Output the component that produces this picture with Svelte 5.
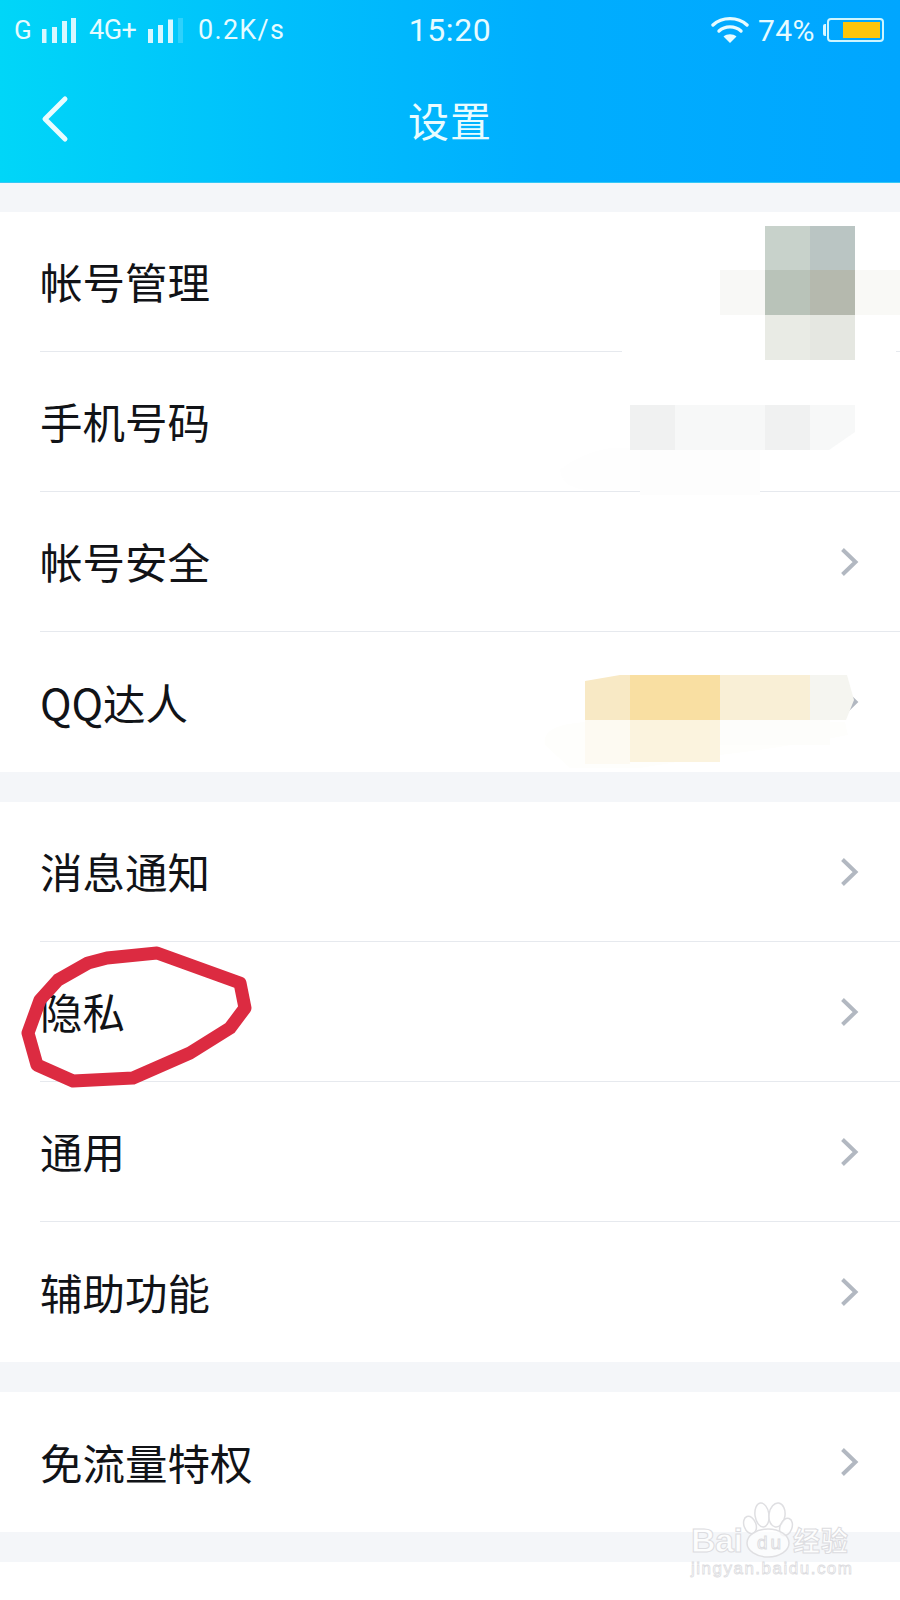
<script>
  const groups = [
    [
      { label: '帐号管理', arrow: false },
      { label: '手机号码', arrow: false },
      { label: '帐号安全', arrow: true },
      { label: 'QQ达人', arrow: true, last: true }
    ],
    [
      { label: '消息通知', arrow: true },
      { label: '隐私', arrow: true },
      { label: '通用', arrow: true },
      { label: '辅助功能', arrow: true, last: true }
    ],
    [{ label: '免流量特权', arrow: true, last: true }]
  ];
  const mosaic = [
    [765, 226, 45, 44, '#c8d2cb'], [810, 226, 45, 44, '#bac5c3'],
    [720, 270, 45, 45, '#f8f8f6'], [765, 270, 45, 45, '#b9c3b9'], [810, 270, 45, 45, '#b5b9ae'], [855, 270, 45, 45, '#f9f9f6'],
    [765, 315, 45, 45, '#e9ebe5'], [810, 315, 45, 45, '#e5e7e1'],
    [630, 405, 45, 45, '#f0f1f1'], [675, 405, 90, 45, '#f7f8f8'], [765, 405, 45, 45, '#f0f1f1'],
    [640, 450, 120, 45, '#fdfdfd'],
    [630, 675, 90, 45, '#f9dfa2'], [720, 675, 90, 45, '#f9efd6'],
    [630, 720, 90, 42, '#fbf3de']
  ];
  const bars1 = [[41, 28, 4.5, 14], [51, 26, 5, 16], [61, 20, 5, 22], [70, 17, 5, 25]];
  const bars2 = [[148, 28, 5, 14], [158, 24, 5, 18], [168, 18.5, 5, 23.5]];
</script>

<div class="page">
  <header class="head">
    <div class="status">
      <div class="left">
        <span class="g">G</span>
        <svg class="bars" width="36" height="28" viewBox="40 16 36 28" aria-hidden="true">
          {#each bars1 as b}<rect x={b[0]} y={b[1]} width={b[2]} height={b[3]} fill="#d8f7ff" />{/each}
        </svg>
        <span class="net">4G+</span>
        <svg class="bars" width="36" height="28" viewBox="148 16 36 28" aria-hidden="true">
          {#each bars2 as b}<rect x={b[0]} y={b[1]} width={b[2]} height={b[3]} fill="#d8f7ff" />{/each}
          <rect x="178" y="17" width="5" height="25" fill="#ffffff" opacity="0.18" />
        </svg>
        <span class="speed">0.2K/s</span>
      </div>
      <div class="time">15:20</div>
      <div class="right">
        <svg width="38" height="28" viewBox="0 0 38 28" aria-hidden="true">
          <g fill="none" stroke="#e6fbff" stroke-width="3.4" stroke-linecap="round">
            <path d="M2 9 C11 0.5 27 0.5 36 9" />
            <path d="M8 15 C14 9.5 24 9.5 30 15" />
          </g>
          <path d="M19 27 L12.5 20.5 C16 17.4 22 17.4 25.500 20.500 Z" fill="#e6fbff" />
        </svg>
        <span class="pct">74%</span>
        <div class="battery">
          <i class="cap"></i>
          <div class="cell"><i class="fill"></i></div>
        </div>
      </div>
    </div>
    <div class="nav">
      <svg class="back" width="30" height="48" viewBox="0 0 30 48" aria-hidden="true">
        <path d="M24 4 L4 24 L24 44" fill="none" stroke="#e9fcff" stroke-width="5" stroke-linecap="round" stroke-linejoin="round" />
      </svg>
      <h1>设置</h1>
    </div>
  </header>

  {#each groups as group}
    <section class="group">
      {#each group as row}
        <div class="row" class:last={row.last}>
          <span class="label">{row.label}</span>
          {#if row.arrow}
            <svg class="chev" width="19" height="30" viewBox="0 0 19 30" aria-hidden="true">
              <path d="M2.500 2.500 L15.500 15 L2.500 27.500" fill="none" stroke="#b2b8c1" stroke-width="4" />
            </svg>
          {/if}
        </div>
      {/each}
    </section>
  {/each}
  <div class="tail"></div>

  <svg class="overlay" width="900" height="1600" viewBox="0 0 900 1600">
    <path d="M622 351 H896 V353 H622 Z" fill="#ffffff" />
    <path d="M560 470 Q600 440 640 450 V490 H590 Q565 490 560 470 Z" fill="#fefefe" />
    <path d="M545 745 Q540 725 585 722 H845 L848 735 Q800 745 720 755 L640 768 H570 Z" fill="#fefefc" />
    {#each mosaic as m}<rect x={m[0]} y={m[1]} width={m[2]} height={m[3]} fill={m[4]} />{/each}
    <path d="M810 405 H855 V432 L829 450 H810 Z" fill="#f7f8f8" />
    <path d="M585 681 L620 675 H630 V720 H585 Z" fill="#f8e9c5" />
    <path d="M810 675 H847 L854 700 L846 720 H810 Z" fill="#f5f5f0" />
    <rect x="585" y="720" width="45" height="44" fill="#fdfaf2" />
    <rect x="720" y="720" width="110" height="25" fill="#fdfdfb" />

    <path class="ring" d="M157 953 L240 983 L245 1008 L230 1028 L190 1053 L133 1078 L73 1081 L37 1065 L28 1033 L40 1000 L58 980 L88 963 L107 958 Z" />

    <g class="mark">
      <ellipse cx="750" cy="1525" rx="6" ry="9" transform="rotate(-20 750 1525)" />
      <ellipse cx="762" cy="1515" rx="7" ry="12" transform="rotate(-8 762 1515)" />
      <ellipse cx="777" cy="1515" rx="8" ry="12" transform="rotate(8 777 1515)" />
      <ellipse cx="786" cy="1527" rx="6" ry="9" transform="rotate(20 786 1527)" />
      <ellipse cx="768" cy="1543" rx="21" ry="14" />
      <text class="mk" x="691" y="1552" font-size="34" font-weight="700" textLength="52">Bai</text>
      <text class="mk" x="757" y="1549" font-size="19" textLength="24">du</text>
      <text class="mk" x="793" y="1551" font-size="27" font-weight="700" textLength="55">经验</text>
      <text class="mk thin" x="691" y="1574" font-size="17" textLength="161">jingyan.baidu.com</text>
    </g>
  </svg>
</div>

<style>
  :global(body) {
    margin: 0;
    background: #f4f6f9;
  }
  .page {
    position: relative;
    width: 900px;
    height: 1600px;
    overflow: hidden;
    background: #f4f6f9;
    font-family: "Noto Sans CJK SC", "Noto Sans", sans-serif;
  }
  .head {
    height: 183px;
    box-sizing: border-box;
    background: linear-gradient(90deg, #00d6f8 0%, #00c0fc 30%, #00aefe 60%, #00a6ff 100%);
    border-bottom: 1px solid #35c8f6;
    color: #e6fbff;
  }
  .status {
    height: 60px;
    display: grid;
    grid-template-columns: 1fr auto 1fr;
    align-items: center;
    font-family: Roboto, "Liberation Sans", sans-serif;
  }
  .left {
    display: flex;
    align-items: center;
    padding-left: 14px;
  }
  .g { font-size: 26px; width: 27px; }
  .bars { flex: none; margin-top: 2px; }
  .net { font-size: 27px; margin-left: 12px; width: 59px; letter-spacing: -0.5px; }
  .speed { font-size: 27px; margin-left: 14px; letter-spacing: 1.3px; }
  .time { font-size: 32px; letter-spacing: 0.6px; }
  .right {
    display: flex;
    align-items: center;
    justify-content: flex-end;
    padding-right: 16px;
  }
  .pct { font-size: 30px; margin-left: 9px; margin-right: 8px; letter-spacing: 0.4px; }
  .battery { display: flex; align-items: center; }
  .cap { width: 3px; height: 12px; background: #d8f7ff; border-radius: 2px 0 0 2px; margin-right: 1px; }
  .cell {
    width: 57px;
    height: 24px;
    box-sizing: border-box;
    border: 2px solid #cdf5ff;
    border-radius: 4px;
    display: flex;
    justify-content: flex-end;
    padding: 2px 2px;
  }
  .fill { width: 37px; background: #fcc50a; }
  .nav {
    height: 122px;
    display: flex;
    align-items: center;
    justify-content: center;
    position: relative;
  }
  .back { position: absolute; left: 41px; top: 35px; }
  h1 {
    margin: -4px 0 0;
    font-size: 41px;
    font-weight: 400;
    line-height: 1;
    color: #e9fcff;
    letter-spacing: 1px;
  }
  .group {
    margin-top: 30px;
    background: #ffffff;
  }
  .head + .group { margin-top: 29px; }
  .row {
    height: 140px;
    box-sizing: border-box;
    margin-left: 40px;
    padding-right: 41px;
    display: flex;
    align-items: center;
    justify-content: space-between;
    border-bottom: 1px solid #e6e9ee;
  }
  .row.last { border-bottom: 0; }
  .label {
    font-size: 42.500px;
    line-height: 1;
    color: #111317;
  }
  .tail {
    margin-top: 30px;
    height: 38px;
    background: #ffffff;
  }
  .overlay {
    position: absolute;
    left: 0;
    top: 0;
    pointer-events: none;
  }
  .ring {
    fill: none;
    stroke: #dc2b41;
    stroke-width: 13;
    stroke-linejoin: round;
  }
  .mark ellipse {
    fill: #ffffffaa;
    stroke: #dfdfe2;
    stroke-width: 1.500;
  }
  .mk {
    font-family: "Liberation Sans", "Noto Sans CJK SC", sans-serif;
    fill: #ffffffcc;
    stroke: #dcdce0;
    stroke-width: 1;
  }
  .mk.thin { stroke-width: 0.800; }
</style>
